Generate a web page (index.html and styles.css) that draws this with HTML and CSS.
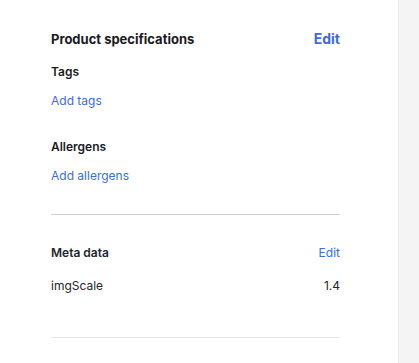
FILE: index.html
```html
<!DOCTYPE html>
<html lang="en">
<head>
  <meta charset="UTF-8" />
  <title>Product specifications</title>
  <link rel="stylesheet" href="styles.css">
</head>
<body>
  <div class="page">
    <div class="main">
      <div class="section specs">
        <div class="section-header">
          <h2>Product specifications</h2>
          <a href="#" class="edit-bold">Edit</a>
        </div>
        <div class="field">
          <h3>Tags</h3>
          <a href="#" class="add-link">Add tags</a>
        </div>
        <div class="field">
          <h3>Allergens</h3>
          <a href="#" class="add-link">Add allergens</a>
        </div>
      </div>

      <div class="section meta">
        <div class="meta-header">
          <h3>Meta data</h3>
          <a href="#" class="edit-link">Edit</a>
        </div>
        <div class="meta-row">
          <span>imgScale</span>
          <span>1.4</span>
        </div>
      </div>
    </div>
    <div class="sidebar"></div>
  </div>
</body>
</html>
```

FILE: styles.css
```css
body {
  margin: 0;
  font-family: Inter, "Noto Sans", sans-serif;
  color: #1b1b1f;
  background: white;
}

a {
  text-decoration: none;
  color: #3d6be0;
}

.page {
  display: flex;
  height: 363px;
}

.main {
  width: 398px;
  padding: 0 58px 0 51px;
  box-sizing: border-box;
  background: white;
}

.sidebar {
  flex: 1;
  background: #f4f4f4;
  border-left: 1px solid #ececec;
}

.section {
  border-bottom: 1px solid #c3d1dc;
}

.specs {
  padding-top: 29px;
  padding-bottom: 29px;
}

.section-header {
  display: flex;
  justify-content: space-between;
  align-items: center;
  height: 20px;
}

.section-header h2 {
  margin: 0;
  font-size: 13px;
  font-weight: 700;
  line-height: 20px;
}

.edit-bold {
  font-size: 14px;
  font-weight: 700;
  line-height: 20px;
}

.field h3 {
  margin: 14px 0 0;
  font-size: 12px;
  font-weight: 600;
  line-height: 18px;
}

.field + .field h3 {
  margin-top: 28px;
}

.add-link {
  display: block;
  margin-top: 11px;
  font-size: 12px;
  line-height: 18px;
}

.meta {
  padding-top: 29px;
  padding-bottom: 42px;
  border-bottom-color: #e6e8eb;
  color: #22252d;
}

.meta-header,
.meta-row {
  display: flex;
  justify-content: space-between;
  align-items: center;
  font-size: 12px;
  line-height: 18px;
}

.meta-header h3 {
  margin: 0;
  font-size: 12px;
  font-weight: 600;
}

.meta-row {
  margin-top: 15px;
}
```
